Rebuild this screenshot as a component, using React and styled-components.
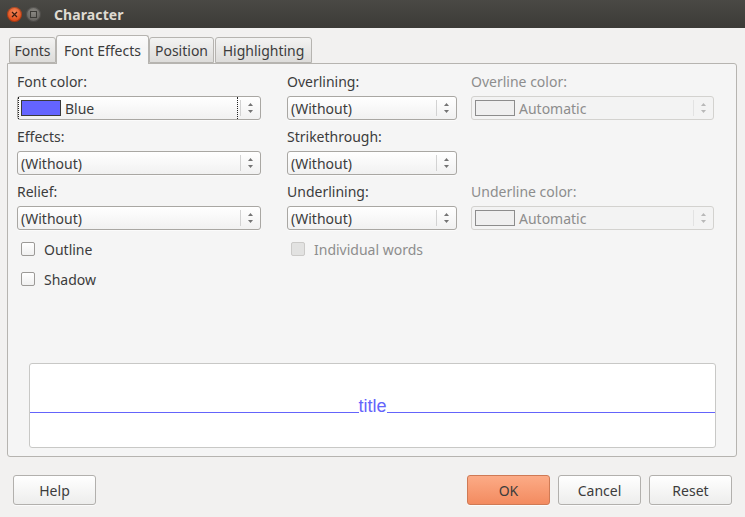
import React from "react";
import styled, { createGlobalStyle } from "styled-components";

const Global = createGlobalStyle`
  html, body { margin: 0; padding: 0; background: #f2f1f0; }
  body { font-family: "Noto Sans", "DejaVu Sans", sans-serif; font-size: 14px; color: #3c3c3c; }
  * { box-sizing: border-box; }
`;

const Window = styled.div`
  width: 745px;
  height: 517px;
  display: flex;
  flex-direction: column;
  background: #f2f1f0;
  overflow: hidden;
`;

const TitleBar = styled.div`
  height: 28px;
  flex: none;
  display: flex;
  align-items: center;
  padding-left: 7px;
  background: linear-gradient(#4a4945, #3c3b37);
`;

const WinButton = styled.div`
  width: 15px;
  height: 15px;
  border-radius: 50%;
  margin-right: 4px;
  display: flex;
  align-items: center;
  justify-content: center;
  background: ${(p) =>
    p.$close
      ? "radial-gradient(circle at 50% 35%, #f58a5c, #df4b17 70%)"
      : "radial-gradient(circle at 50% 35%, #8a8883, #64625e 70%)"};
  box-shadow: inset 0 0 0 1px rgba(0, 0, 0, 0.25);
`;

const Title = styled.div`
  margin-left: 9px;
  font-weight: bold;
  font-size: 14px;
  color: #dfdbd2;
  letter-spacing: 0.1px;
`;

const Main = styled.div`
  padding: 7px 8px 0 7px;
  display: flex;
  flex-direction: column;
`;

const TabBar = styled.div`
  height: 28px;
  display: flex;
  align-items: flex-end;
  padding-left: 2px;
  position: relative;
  z-index: 1;
`;

const Tab = styled.div`
  width: ${(p) => p.$w}px;
  height: ${(p) => (p.$active ? 29 : 26)}px;
  margin-bottom: ${(p) => (p.$active ? -1 : 0)}px;
  margin-right: ${(p) => p.$gap || 0}px;
  display: flex;
  align-items: center;
  justify-content: center;
  border: 1px solid #b6b4b0;
  border-bottom: ${(p) => (p.$active ? "none" : "1px solid #b6b4b0")};
  border-radius: 3px 3px 0 0;
  background: ${(p) =>
    p.$active ? "linear-gradient(#fbfbfb, #f5f5f5 40%)" : "linear-gradient(#f3f3f2, #dddcda)"};
  color: #3c3c3c;
  font-size: 14px;
  padding-top: ${(p) => (p.$active ? 0 : 1)}px;
  white-space: nowrap;
`;

const Panel = styled.div`
  height: 394px;
  border: 1px solid #b6b4b0;
  border-radius: 0 3px 3px 3px;
  background: #f5f5f5;
  display: flex;
  flex-direction: column;
  padding: 9px 20px 8px 9px;
`;

const Grid = styled.div`
  display: grid;
  grid-template-columns: 270px 184px 243px;
  grid-auto-rows: auto;
  row-gap: 8px;
`;

const Field = styled.div`
  display: flex;
  flex-direction: column;
`;

const Label = styled.div`
  height: 18px;
  line-height: 17px;
  margin-bottom: 5px;
  color: ${(p) => (p.$disabled ? "#8d8d8d" : "#3c3c3c")};
  white-space: nowrap;
`;

const Combo = styled.div`
  width: ${(p) => p.$w}px;
  height: 24px;
  display: flex;
  align-items: center;
  border: 1px solid ${(p) => (p.$disabled ? "#d3d2cf" : "#a9a7a3")};
  border-radius: 3px;
  background: ${(p) => (p.$disabled ? "#f3f3f3" : "linear-gradient(#ffffff, #f1f1f1)")};
  color: ${(p) => (p.$disabled ? "#8d8d8d" : "#3c3c3c")};
  box-shadow: ${(p) => (p.$disabled ? "none" : "0 1px 0 rgba(255,255,255,0.6)")};
`;

const ComboValue = styled.div`
  flex: 1;
  height: 22px;
  display: flex;
  align-items: center;
  padding-left: 2px;
  border-left: 1px ${(p) => (p.$focus ? "dotted #222" : "solid transparent")};
  border-right: 1px ${(p) => (p.$focus ? "dotted #222" : "solid transparent")};
  white-space: nowrap;
`;

const Swatch = styled.span`
  width: 40px;
  height: 16px;
  flex: none;
  margin-right: 4px;
  background: ${(p) => p.$color};
  border: 1px solid ${(p) => (p.$disabled ? "#8c8c8c" : "#3a3a3a")};
`;

const Sep = styled.div`
  width: 1px;
  height: 16px;
  margin-left: 2px;
  background: ${(p) => (p.$disabled ? "#e2e2e2" : "#d2d2d2")};
`;

const ArrowBox = styled.div`
  width: 19px;
  height: 22px;
  display: flex;
  align-items: center;
  justify-content: center;
`;

const CheckRow = styled.div`
  height: 22px;
  display: flex;
  align-items: center;
  padding-left: 4px;
  color: ${(p) => (p.$disabled ? "#8d8d8d" : "#3c3c3c")};
`;

const Box = styled.span`
  width: 14px;
  height: 14px;
  margin-right: 9px;
  border-radius: 2px;
  border: 1px solid ${(p) => (p.$disabled ? "#cbcac8" : "#9c9a97")};
  background: ${(p) => (p.$disabled ? "#e2e2e1" : "linear-gradient(#ffffff, #f0f0f0)")};
`;

const Preview = styled.div`
  margin: auto 0 0 12px;
  height: 85px;
  border: 1px solid #c8c8c6;
  border-radius: 3px;
  background: #ffffff;
  display: flex;
  align-items: flex-start;
  padding-top: 32px;
`;

const Rule = styled.div`
  flex: 1;
  height: 1px;
  margin-top: 16px;
  background: #6464fb;
`;

const PreviewText = styled.span`
  font-family: "Liberation Sans", Arial, sans-serif;
  font-size: 18px;
  line-height: 20px;
  color: #6464fb;
`;

const Footer = styled.div`
  display: flex;
  justify-content: space-between;
  padding: 18px 13px 0 13px;
`;

const ButtonGroup = styled.div`
  display: flex;
  gap: 8px;
`;

const Button = styled.div`
  width: 83px;
  height: 30px;
  display: flex;
  align-items: center;
  justify-content: center;
  border-radius: 3px;
  font-size: 14px;
  color: #3c3c3c;
  border: 1px solid ${(p) => (p.$primary ? "#cf7a55" : "#b2b0ad")};
  background: ${(p) =>
    p.$primary ? "linear-gradient(#fcab86, #f38b60)" : "linear-gradient(#ffffff, #ededec)"};
  box-shadow: 0 1px 0 rgba(255, 255, 255, 0.7);
`;

const Arrows = ({ disabled }) => (
  <svg width="7" height="12" viewBox="0 0 7 12">
    <path d="M3.5 1 L6 4 L1 4 Z" fill={disabled ? "#b8b8b8" : "#737373"} />
    <path d="M3.5 11 L6 8 L1 8 Z" fill={disabled ? "#b8b8b8" : "#737373"} />
  </svg>
);

const Select = ({ w, value, swatch, focus, disabled }) => (
  <Combo $w={w} $disabled={disabled}>
    <ComboValue $focus={focus}>
      {swatch && <Swatch $color={swatch} $disabled={disabled} />}
      {value}
    </ComboValue>
    <Sep $disabled={disabled} />
    <ArrowBox>
      <Arrows disabled={disabled} />
    </ArrowBox>
  </Combo>
);

const SelectField = ({ label, w, disabled, ...rest }) => (
  <Field>
    <Label $disabled={disabled}>{label}</Label>
    <Select w={w} disabled={disabled} {...rest} />
  </Field>
);

const Check = ({ label, disabled }) => (
  <CheckRow $disabled={disabled}>
    <Box $disabled={disabled} />
    {label}
  </CheckRow>
);

export default function App() {
  return (
    <Window>
      <Global />
      <TitleBar>
        <WinButton $close>
          <svg width="7" height="7" viewBox="0 0 7 7">
            <path d="M1 1 L6 6 M6 1 L1 6" stroke="#3a1c10" strokeWidth="1.2" />
          </svg>
        </WinButton>
        <WinButton>
          <svg width="7" height="7" viewBox="0 0 7 7">
            <rect x="0.5" y="0.5" width="6" height="6" fill="none" stroke="#3c3b37" strokeWidth="1" />
          </svg>
        </WinButton>
        <Title>Character</Title>
      </TitleBar>
      <Main>
        <TabBar>
          <Tab $w={47}>Fonts</Tab>
          <Tab $active $w={93}>Font Effects</Tab>
          <Tab $w={65} $gap={1}>Position</Tab>
          <Tab $w={97}>Highlighting</Tab>
        </TabBar>
        <Panel>
          <Grid>
            <SelectField label="Font color:" w={244} value="Blue" swatch="#6464ff" focus />
            <SelectField label="Overlining:" w={170} value="(Without)" />
            <SelectField label="Overline color:" w={243} value="Automatic" swatch="#efefef" disabled />
            <SelectField label="Effects:" w={244} value="(Without)" />
            <SelectField label="Strikethrough:" w={170} value="(Without)" />
            <div />
            <SelectField label="Relief:" w={244} value="(Without)" />
            <SelectField label="Underlining:" w={170} value="(Without)" />
            <SelectField label="Underline color:" w={243} value="Automatic" swatch="#efefef" disabled />
            <Check label="Outline" />
            <Check label="Individual words" disabled />
            <div />
            <Check label="Shadow" />
          </Grid>
          <Preview>
            <Rule />
            <PreviewText>title</PreviewText>
            <Rule />
          </Preview>
        </Panel>
      </Main>
      <Footer>
        <Button>Help</Button>
        <ButtonGroup>
          <Button $primary>OK</Button>
          <Button>Cancel</Button>
          <Button>Reset</Button>
        </ButtonGroup>
      </Footer>
    </Window>
  );
}
